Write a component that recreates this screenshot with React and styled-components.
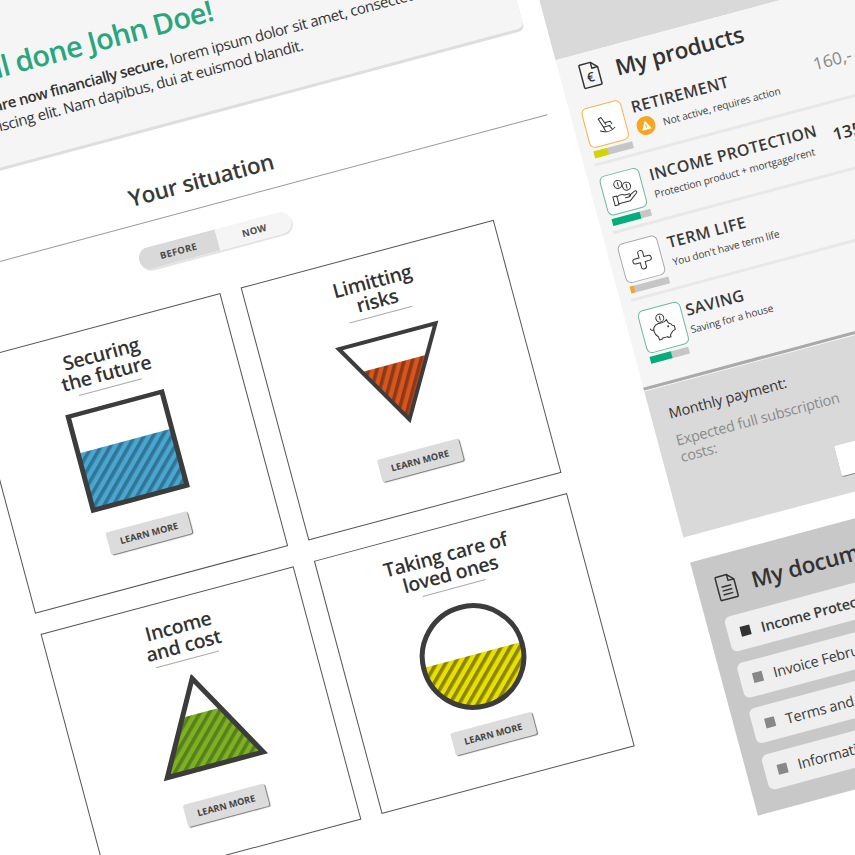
import styled, { createGlobalStyle } from "styled-components";

const GlobalStyle = createGlobalStyle`
  html, body {
    margin: 0;
    width: 855px;
    height: 855px;
    overflow: hidden;
    background: #fff;
    font-family: "Open Sans", "Noto Sans", sans-serif;
    color: #333;
  }
`;

// the whole page is photographed tilted, so everything hangs off this one sheet
const Sheet = styled.div`
  display: flex;
  gap: 22px;
  width: 1045px;
  transform: rotate(-15deg) translate(-204px, -10px);
  transform-origin: 0 0;
`;

const Main = styled.main`
  width: 703px;
  flex: none;
`;

const Notice = styled.section`
  box-sizing: border-box;
  height: 172px;
  padding: 54px 0 0 141px;
  background: #f5f5f5;
  border-radius: 0 0 6px 6px;
  box-shadow: 0 3px 0 #dedede;
`;

const Greeting = styled.h1`
  margin: 0 0 7px -3px;
  font-size: 29px;
  line-height: 40px;
  font-weight: 600;
  letter-spacing: -0.65px;
  color: #2aa57c;
  white-space: nowrap;
`;

const Lead = styled.p`
  margin: 0;
  font-size: 15px;
  line-height: 20px;
  letter-spacing: -0.4px;
  color: #333;
  white-space: nowrap;

  b {
    font-weight: 600;
    letter-spacing: -0.5px;
  }
`;

const Heading = styled.h2`
  margin: 47px 0 0;
  padding-bottom: 9px;
  height: 34px;
  border-bottom: 1px solid #999;
  font-size: 22.5px;
  line-height: 34px;
  font-weight: 600;
  letter-spacing: -0.3px;
  text-align: center;
  color: #3a3a3a;
`;

const Toggle = styled.div`
  display: flex;
  width: 157px;
  height: 22px;
  margin: 24px 0 0 271px;
  border-radius: 11px;
  overflow: hidden;
  box-shadow: 1px 2px 1px #e2e2e2;
`;

const ToggleSide = styled.div`
  flex: none;
  display: flex;
  align-items: center;
  justify-content: center;
  width: ${({ $on }) => ($on ? "81px" : "76px")};
  font-size: 9.5px;
  font-weight: 700;
  letter-spacing: 0.3px;
  color: #4a4a4a;
  background: ${({ $on }) => ($on ? "#d9d9d9" : "#f5f5f5")};
`;

const Grid = styled.div`
  display: grid;
  grid-template-columns: 262px 262px;
  grid-auto-rows: 262px;
  gap: 21px;
  justify-content: center;
  margin-top: 41px;
`;

const Card = styled.article`
  box-sizing: border-box;
  display: flex;
  flex-direction: column;
  align-items: center;
  padding: 17px ${({ $nudge = 0 }) => Math.max(-$nudge, 0)}px 0 ${({ $nudge = 0 }) => Math.max($nudge, 0)}px;
  border: 1px solid #555;
`;

const CardTitle = styled.h3`
  margin: 0;
  height: 44px;
  font-size: 19.5px;
  line-height: 20px;
  font-weight: 600;
  letter-spacing: -0.35px;
  text-align: center;
  color: #333;
`;

const CardRule = styled.div`
  width: 65px;
  height: 1px;
  background: #aaa;
  margin-bottom: 15px;
`;

const GaugeSvg = styled.svg`
  display: block;
  width: 110px;
  height: 112px;
  margin-bottom: 12px;
`;

const LearnMore = styled.button`
  width: 84px;
  height: 23px;
  padding: 0;
  border: 0;
  border-radius: 2px;
  background: #dcdcdc;
  box-shadow: 1px 1px 1px #777;
  font-family: inherit;
  font-size: 9.2px;
  font-weight: 700;
  letter-spacing: 0;
  color: #444;
`;

const Side = styled.aside`
  width: 320px;
  flex: none;
`;

const SideTop = styled.div`
  height: 212px;
  background: #d9d9d9;
`;

const Products = styled.section`
  box-sizing: border-box;
  height: 339px;
  background: #f5f5f5;
  padding: 0 0 0 11px;
`;

const PanelHead = styled.div`
  box-sizing: border-box;
  display: flex;
  align-items: center;
  gap: 15px;
  height: 43px;
  padding: 3px 0 0 ${({ $inset }) => $inset}px;
`;

const PanelTitle = styled.h2`
  margin: 0;
  font-size: 22.5px;
  line-height: 30px;
  font-weight: 600;
  letter-spacing: -0.3px;
  color: #333;
  white-space: nowrap;
`;

const Row = styled.div`
  box-sizing: border-box;
  display: flex;
  height: 70px;
  padding-top: 11px;
  border-bottom: ${({ $last }) => ($last ? "0" : "3px solid #e8e8e8")};
`;

const IconCol = styled.div`
  flex: none;
  width: 41px;
  margin-right: 9px;
`;

const IconBox = styled.div`
  box-sizing: border-box;
  display: flex;
  align-items: center;
  justify-content: center;
  width: ${({ $big }) => ($big ? "44px" : "41px")};
  height: ${({ $big }) => ($big ? "44px" : "41px")};
  margin-left: ${({ $big }) => ($big ? "2px" : "0")};
  background: #fff;
  border: 1.5px solid ${({ $tone }) => $tone};
  border-radius: 6px;
`;

const Bar = styled.div`
  width: 40px;
  height: 7px;
  margin: 3px 0 0 ${({ $big }) => ($big ? "3px" : "1.5px")};
  background: #c6c6c6;
`;

const BarFill = styled.div`
  height: 100%;
  background: ${({ $tone }) => $tone};
`;

const RowText = styled.div`
  flex: none;
  width: 187px;
  padding-top: 1px;
`;

const RowTitle = styled.div`
  font-size: 16px;
  line-height: 20px;
  font-weight: 600;
  letter-spacing: 0.3px;
  color: #3a3a3a;
  white-space: nowrap;
`;

const RowSub = styled.div`
  display: flex;
  align-items: center;
  gap: 8px;
  margin-top: 2px;
  font-size: 10.2px;
  line-height: 16px;
  letter-spacing: -0.12px;
  color: #444;
  white-space: nowrap;
`;

const Price = styled.div`
  font-size: 17px;
  line-height: 20px;
  margin: ${({ $muted }) => ($muted ? "7px 0 0" : "10px 0 0 1px")};
  font-weight: ${({ $muted }) => ($muted ? 400 : 600)};
  color: ${({ $muted }) => ($muted ? "#888" : "#333")};
  white-space: nowrap;
`;

const Summary = styled.section`
  box-sizing: border-box;
  height: 155px;
  background: #d9d9d9;
  padding: 20px 0 0 18px;
  border-top: 3px solid #aaa;
  box-shadow: inset 0 1px 0 #f5f5f5;
`;

const MonthlyLabel = styled.div`
  font-size: 14.5px;
  line-height: 18px;
  letter-spacing: -0.1px;
  color: #333;
`;

const ExpectedRow = styled.div`
  display: flex;
  flex-direction: column;
  margin-top: 10px;
`;

const ExpectedLabel = styled.div`
  width: 185px;
  font-size: 14.5px;
  line-height: 17px;
  letter-spacing: -0.2px;
  color: #8a8a8a;
`;

const AmountBox = styled.div`
  box-sizing: border-box;
  width: 120px;
  height: 31px;
  margin: 21px 0 0 151px;
  padding: 5px 0 0 18px;
  background: #fff;
  border-radius: 2px;
  box-shadow: 0 1px 0 #888;
  font-size: 14px;
  font-weight: 600;
  color: #f5a623;
`;

const Documents = styled.section`
  box-sizing: border-box;
  height: 262px;
  margin-top: 26px;
  padding: 10px 18px 0;
  background: #c8c8c8;
`;

const DocRows = styled.div`
  display: flex;
  flex-direction: column;
  gap: 11.5px;
  margin-top: 9px;
`;

const DocRow = styled.div`
  display: flex;
  align-items: center;
  gap: 11px;
  height: 36px;
  padding-left: 13px;
  border-radius: 6px;
  background: #efefef;
  font-size: 14.5px;
  font-weight: ${({ $active }) => ($active ? 600 : 400)};
  letter-spacing: -0.2px;
  color: #3a3a3a;
  white-space: nowrap;
`;

const Bullet = styled.span`
  flex: none;
  width: 10px;
  height: 10px;
  background: ${({ $active }) => ($active ? "#333" : "#888")};
`;

function Gauge({ id, kind, base, dark, level, period = 8, angle = 45, sw = 5 }) {
  const shapes = {
    square: <rect x="7" y="2" width="97" height="97" />,
    down: <polygon points="5,7 105,7 55,93" />,
    up: <polygon points="55,4 104.7,93.5 5.3,93.5" />,
    circle: <circle cx="55" cy="55.6" r="50.8" />,
  };
  return (
    <GaugeSvg viewBox="0 0 110 112">
      <defs>
        <pattern id={id} width={period} height={period} patternUnits="userSpaceOnUse" patternTransform={`rotate(${angle})`}>
          <rect width={period} height={period} fill={base} />
          <rect width={period * 0.45} height={period} fill={dark} />
        </pattern>
        <clipPath id={`${id}-clip`}>{shapes[kind]}</clipPath>
      </defs>
      <g clipPath={`url(#${id}-clip)`}>
        <rect x="0" y={level} width="110" height={112 - level} fill={`url(#${id})`} />
      </g>
      <g fill="none" stroke="#3c3c3c" strokeWidth={sw}>{shapes[kind]}</g>
    </GaugeSvg>
  );
}

function SituationCard({ title, second, gauge, nudge }) {
  return (
    <Card $nudge={nudge}>
      <CardTitle>{title}<br />{second}</CardTitle>
      <CardRule />
      <Gauge {...gauge} />
      <LearnMore>LEARN MORE</LearnMore>
    </Card>
  );
}

const line = { fill: "none", stroke: "#333", strokeWidth: 1, strokeLinecap: "round", strokeLinejoin: "round" };

function ChairIcon() {
  return (
    <svg width="24" height="24" viewBox="0 0 24 24" {...line}>
      <path d="M6 5l3 9h7" />
      <path d="M6 5l3-1 3 8" />
      <path d="M9 14l1 4M15 14l2 4M12 10h5l1 3" />
      <path d="M5 17c5 3 11 3 15 0" />
    </svg>
  );
}

function HandIcon() {
  return (
    <svg width="30" height="30" viewBox="0 0 30 30" {...line}>
      <circle cx="11" cy="6" r="4" />
      <circle cx="19" cy="10" r="4" />
      <path d="M11 4v4M19 8v4" />
      <path d="M3 17h4v9H3zM7 18c3-2 5-2 8 0h4c2 0 2 3 0 3h-4" />
      <path d="M19 20l6-3c2-1 3 1 2 2l-8 6H7" />
    </svg>
  );
}

function PlusIcon() {
  return (
    <svg width="24" height="24" viewBox="0 0 24 24" {...line}>
      <path d="M9.5 4.5c0-2.5 5-2.5 5 0v5h5c2.5 0 2.5 5 0 5h-5v5c0 2.5-5 2.5-5 0v-5h-5c-2.5 0-2.5-5 0-5h5z" />
    </svg>
  );
}

function PiggyIcon() {
  return (
    <svg width="30" height="30" viewBox="0 0 30 30" {...line}>
      <circle cx="14" cy="5" r="4" />
      <path d="M14 3v4" />
      <path d="M5 16c0-5 5-7 10-6 2 0 3 0 5-2l1 4c2 1 3 2 3 3l2 1v4l-3 1c-1 1-2 2-3 3v2h-3v-1h-6v1H8v-3c-2-2-3-4-3-7z" />
      <path d="M5 15c-2 0-3-1-3-2" />
      <circle cx="20" cy="15" r=".5" />
    </svg>
  );
}

function WarnBadge() {
  return (
    <svg width="19" height="19" viewBox="0 0 19 19" style={{ flex: "none" }}>
      <circle cx="9.5" cy="9.5" r="9.5" fill="#f5a623" />
      <path d="M9.5 4.5l5 9h-10z" fill="#fff" />
      <rect x="9" y="8" width="1" height="3.4" fill="#f5a623" />
    </svg>
  );
}

function BillIcon() {
  return (
    <svg width="22" height="28" viewBox="0 0 22 28" fill="none" stroke="#333" strokeWidth="1.5" strokeLinejoin="round">
      <path d="M3 2h11l6 6v17c0 .6-.4 1-1 1H3c-.6 0-1-.4-1-1V3c0-.6.4-1 1-1z" />
      <path d="M14 2v6h6" />
      <text x="10.5" y="21" fontSize="13" fontWeight="600" fill="#333" stroke="none" textAnchor="middle" fontFamily="Open Sans">€</text>
    </svg>
  );
}

function PaperIcon() {
  return (
    <svg width="22" height="28" viewBox="0 0 22 28" fill="none" stroke="#333" strokeWidth="1.5" strokeLinejoin="round">
      <path d="M3 2h11l6 6v17c0 .6-.4 1-1 1H3c-.6 0-1-.4-1-1V3c0-.6.4-1 1-1z" />
      <path d="M14 2v6h6M6 13h10M6 17h10M6 21h10" />
    </svg>
  );
}

const products = [
  { title: "RETIREMENT", sub: "Not active, requires action", warn: true, tone: "#f5b24a", bar: "#d4d400", fill: 35, icon: <ChairIcon />, price: "160,-", muted: true },
  { title: "INCOME PROTECTION", sub: "Protection product + mortgage/rent", tone: "#6cb89c", bar: "#00ae7b", fill: 74, icon: <HandIcon />, price: "135,-" },
  { title: "TERM LIFE", sub: "You don't have term life", tone: "#aaa", bar: "#f5a623", fill: 12, icon: <PlusIcon /> },
  { title: "SAVING", sub: "Saving for a house", tone: "#6cb89c", bar: "#00ae7b", fill: 55, icon: <PiggyIcon />, big: true },
];

const documents = ["Income Protection", "Invoice February", "Terms and conditions", "Information"];

export default function App() {
  return (
    <>
      <GlobalStyle />
      <Sheet>
        <Main>
          <Notice>
            <Greeting>Well done John Doe!</Greeting>
            <Lead>
              <b>You are now financially secure,</b> lorem ipsum dolor sit amet, consectetur<br />
              adipiscing elit. Nam dapibus, dui at euismod blandit.
            </Lead>
          </Notice>
          <Heading>Your situation</Heading>
          <Toggle>
            <ToggleSide $on>BEFORE</ToggleSide>
            <ToggleSide>NOW</ToggleSide>
          </Toggle>
          <Grid>
            <SituationCard title="Securing" second="the future"
              gauge={{ id: "blue", kind: "square", base: "#4aa5cf", dark: "#2f7596", level: 40.5 }} />
            <SituationCard title="Limitting" second="risks" nudge={-5}
              gauge={{ id: "orange", kind: "down", base: "#d9541e", dark: "#8a3a14", level: 35, angle: 30, sw: 4 }} />
            <SituationCard title="Income" second="and cost" nudge={8}
              gauge={{ id: "green", kind: "up", base: "#7fb024", dark: "#55801a", level: 39.5 }} />
            <SituationCard title="Taking care of" second="loved ones" nudge={-5}
              gauge={{ id: "yellow", kind: "circle", base: "#e8e000", dark: "#8a8400", level: 54 }} />
          </Grid>
        </Main>
        <Side>
          <SideTop />
          <Products>
            <PanelHead $inset={8}>
              <BillIcon />
              <PanelTitle>My products</PanelTitle>
            </PanelHead>
            {products.map((p, i) => (
              <Row key={p.title} $last={i === products.length - 1}>
                <IconCol>
                  <IconBox $tone={p.tone} $big={p.big}>{p.icon}</IconBox>
                  <Bar $big={p.big}><BarFill $tone={p.bar} style={{ width: `${p.fill}%` }} /></Bar>
                </IconCol>
                <RowText>
                  <RowTitle>{p.title}</RowTitle>
                  <RowSub>{p.warn && <WarnBadge />}{p.sub}</RowSub>
                </RowText>
                {p.price && <Price $muted={p.muted}>{p.price}</Price>}
              </Row>
            ))}
          </Products>
          <Summary>
            <MonthlyLabel>Monthly payment:</MonthlyLabel>
            <ExpectedRow>
              <ExpectedLabel>Expected full subscription costs:</ExpectedLabel>
              <AmountBox>€</AmountBox>
            </ExpectedRow>
          </Summary>
          <Documents>
            <PanelHead $inset={0}>
              <PaperIcon />
              <PanelTitle>My documents</PanelTitle>
            </PanelHead>
            <DocRows>
              {documents.map((d, i) => (
                <DocRow key={d} $active={i === 0}>
                  <Bullet $active={i === 0} />{d}
                </DocRow>
              ))}
            </DocRows>
          </Documents>
        </Side>
      </Sheet>
    </>
  );
}
